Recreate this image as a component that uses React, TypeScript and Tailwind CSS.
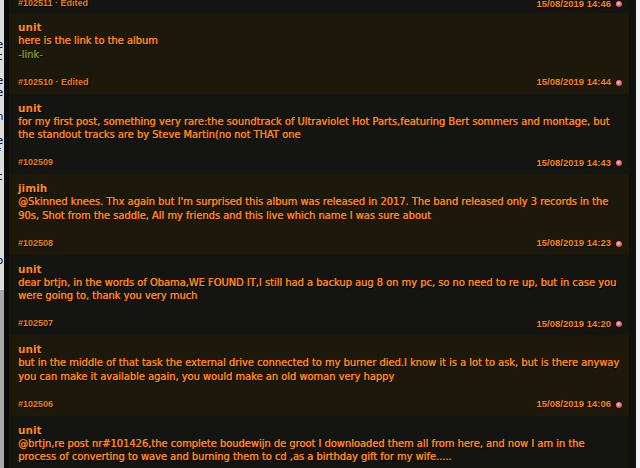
import React from "react";

type Post = {
  id: string;
  edited?: boolean;
  date: string;
  name?: string;
  lines?: { text: string; link?: boolean }[];
  olive: boolean;
  partial?: "top" | "bottom";
};

const posts: Post[] = [
  { id: "#102511", edited: true, date: "15/08/2019 14:46", olive: false, partial: "top" },
  {
    id: "#102510",
    edited: true,
    date: "15/08/2019 14:44",
    name: "unit",
    olive: true,
    lines: [{ text: "here is the link to the album" }, { text: "-link-", link: true }],
  },
  {
    id: "#102509",
    date: "15/08/2019 14:43",
    name: "unit",
    olive: false,
    lines: [
      {
        text: "for my first post, something very rare:the soundtrack of Ultraviolet Hot Parts,featuring Bert sommers and montage, but",
      },
      { text: "the standout tracks are by Steve Martin(no not THAT one" },
    ],
  },
  {
    id: "#102508",
    date: "15/08/2019 14:23",
    name: "jimih",
    olive: true,
    lines: [
      {
        text: "@Skinned knees. Thx again but I'm surprised this album was released in 2017. The band released only 3 records in the",
      },
      { text: "90s, Shot from the saddle, All my friends and this live which name I was sure about" },
    ],
  },
  {
    id: "#102507",
    date: "15/08/2019 14:20",
    name: "unit",
    olive: false,
    lines: [
      {
        text: "dear brtjn, in the words of Obama,WE FOUND IT,I still had a backup aug 8 on my pc, so no need to re up, but in case you",
      },
      { text: "were going to, thank you very much" },
    ],
  },
  {
    id: "#102506",
    date: "15/08/2019 14:06",
    name: "unit",
    olive: true,
    lines: [
      {
        text: "but in the middle of that task the external drive connected to my burner died.I know it is a lot to ask, but is there anyway",
      },
      { text: "you can make it available again, you would make an old woman very happy" },
    ],
  },
  {
    id: "",
    date: "",
    name: "unit",
    olive: false,
    partial: "bottom",
    lines: [
      {
        text: "@brtjn,re post nr#101426,the complete boudewijn de groot I downloaded them all from here, and now I am in the",
      },
      { text: "process of converting to wave and burning them to cd ,as a birthday gift for my wife....." },
    ],
  },
];

function Footer({ id, edited, date }: { id: string; edited?: boolean; date: string }) {
  return (
    <div className="flex h-[12px] items-center justify-between pr-[7px] font-['Liberation_Sans',Arial,sans-serif]">
      <span className="text-[9px] font-bold text-[#e88010]">
        {id}
        {edited ? " · Edited" : ""}
      </span>
      <span className="flex items-center gap-[5px]">
        <span className="text-[9.5px] font-bold text-[#f58612]">{date}</span>
        <span className="h-[6px] w-[6px] rounded-full bg-[radial-gradient(circle_at_40%_40%,#ffc0c8,#e85a6a_55%,#b83444)] [box-shadow:0_0_1px_#000]" />
      </span>
    </div>
  );
}

function Block({ p }: { p: Post }) {
  const bg = p.olive ? "bg-[#1c190b]" : "bg-[#141410]";
  if (p.partial === "top") {
    return (
      <div className={`${bg} flex h-[13px] flex-col justify-end pb-[3px] pl-[9px]`}>
        <Footer id={p.id} edited={p.edited} date={p.date} />
      </div>
    );
  }
  return (
    <div className={`${bg} flex h-[80.5px] shrink-0 flex-col pb-[5px] pl-[9px] pt-[7px]`}>
      <div className="h-[14px] text-[10.5px] font-bold leading-[14px] text-[#ff8a10]">{p.name}</div>
      {p.lines?.map((l, i) => (
        <div
          key={i}
          className={`whitespace-nowrap text-[9.9px] leading-[13.5px] [text-shadow:0.4px_0_0_currentColor,1px_1px_1px_#000] ${
            l.link ? "text-[#7c8c18]" : "text-[#ff8410]"
          }`}
        >
          {l.text}
        </div>
      ))}
      {p.partial !== "bottom" && (
        <div className="mt-auto">
          <Footer id={p.id} edited={p.edited} date={p.date} />
        </div>
      )}
    </div>
  );
}

const leftLetters = ["e", "c", "", "e", "e", "", "n", "", "e", "f", "i", "c", "", "", "", "l", "", "", "o"];

export default function App() {
  return (
    <div className="flex h-[468px] w-[640px] overflow-hidden bg-[#141410] font-['DejaVu_Sans',Verdana,sans-serif] [text-shadow:1px_1px_1px_#000]">
      <div className="flex w-[4px] shrink-0 flex-col overflow-hidden bg-[#dcdcdc] [text-shadow:none]">
        <div className="flex h-[290px] flex-col pt-[39px]">
          {leftLetters.map((c, i) => (
            <div key={i} className="-ml-[3px] h-[12px] shrink-0 text-[10px] leading-[12px] text-black">
              {c}
            </div>
          ))}
        </div>
        <div className="flex-1 bg-[#a8a8a8]" />
      </div>
      <div className="w-[5px] shrink-0 bg-[#0c0c0c]" />
      <div className="flex min-w-0 flex-1 flex-col">
        {posts.map((p, i) => (
          <Block key={i} p={p} />
        ))}
      </div>
      <div className="w-[7px] shrink-0 bg-[#101010]" />
      <div className="w-[4px] shrink-0 bg-[#f2f2f2]" />
    </div>
  );
}
